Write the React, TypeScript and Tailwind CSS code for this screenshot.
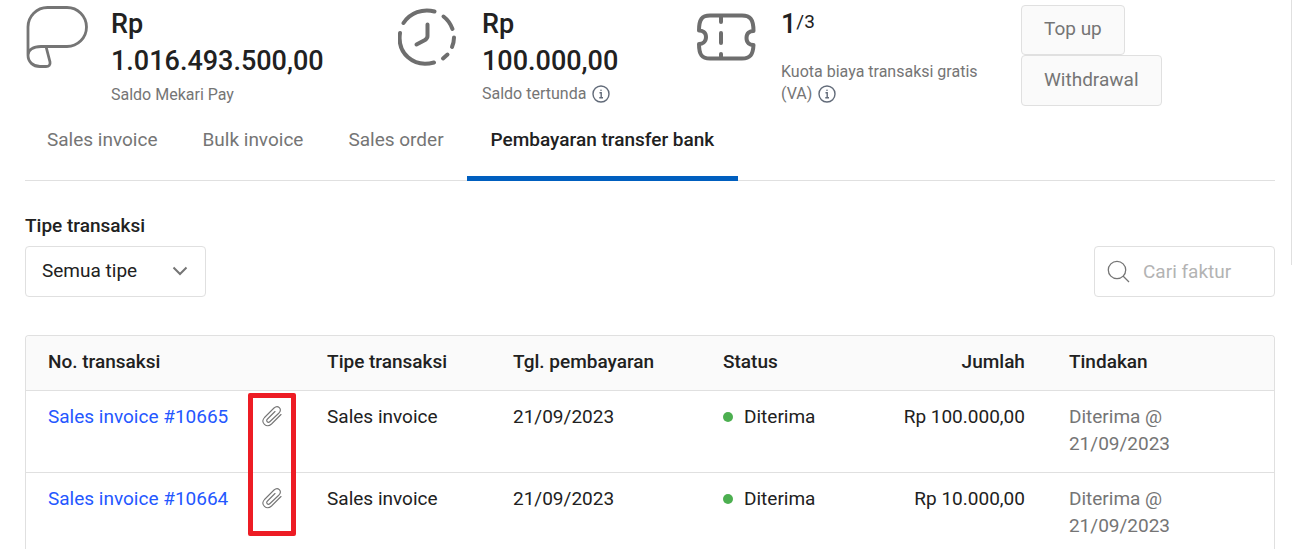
import { useState } from "react";

const tabs = ["Sales invoice", "Bulk invoice", "Sales order", "Pembayaran transfer bank"];

const transactions = [
  { id: "10665", type: "Sales invoice", date: "21/09/2023", status: "Diterima", amount: "Rp 100.000,00" },
  { id: "10664", type: "Sales invoice", date: "21/09/2023", status: "Diterima", amount: "Rp 10.000,00" },
];

const WalletIcon = () => (
  <svg width="64" height="64" viewBox="0 0 64 64" fill="none" stroke="#757575" strokeWidth="2.8" strokeLinecap="round" strokeLinejoin="round" className="shrink-0">
    <path d="M3 50V22A19.500 19.500 0 0 1 22.500 2.500H42A19.500 19.500 0 0 1 42 41.500H16C8 41.500 3 45 3 50C3 57 8 61.500 15 61.500H21C24 61.500 25.500 60 25 57L21 41.500" />
  </svg>
);

const ClockIcon = () => (
  <svg width="60" height="60" viewBox="0 0 60 60" fill="none" stroke="#6e6e6e" strokeWidth="4" strokeLinecap="round" strokeLinejoin="round" className="shrink-0">
    <path d="M5.500 16A28 28 0 0 1 36.500 4.500" />
    <path d="M2 26C-1 46 15 61 36 55.500" />
    <path d="M45.500 9.500Q51.500 14 54.500 22" />
    <path d="M56 30.500Q56 35 54 40" />
    <path d="M45 51.500L49.500 47.500" />
    <path d="M29.500 17.500V29C29.500 31 28.500 32 27 33L18.500 37.500" />
  </svg>
);

const TicketIcon = () => (
  <svg width="60" height="48" viewBox="0 0 60 48" fill="none" stroke="#6e6e6e" strokeWidth="4" strokeLinecap="round" strokeLinejoin="round" className="shrink-0">
    <path d="M14 2.500H46C54 2.500 57.500 6 57.500 18C54 18 50.500 20 50.500 25C50.500 30 54 32 57.500 32C57 42 54 45.500 46 45.500H14C6 45.500 3 42 3 31C6 31 10 29 10 24C10 19 6 17.500 3 17.500C3 6 6 2.500 14 2.500Z" />
    <path d="M25 3V9M25 20V30M25 41V45" />
  </svg>
);

const InfoIcon = () => (
  <svg width="18" height="18" viewBox="0 0 18 18" fill="none" stroke="#626b79" strokeWidth="1.4" className="ml-1.5 inline-block align-[-4px]">
    <circle cx="9" cy="9" r="8" />
    <path d="M7.500 7.700H9.200V12.800M7.300 12.800H11" />
    <circle cx="9" cy="5.300" r="0.800" fill="#626b79" stroke="none" />
  </svg>
);

const ClipIcon = () => (
  <svg width="22" height="22" viewBox="0 0 22 22" fill="none" stroke="#757575" strokeWidth="1.1" strokeLinecap="round" strokeLinejoin="round">
    <path d="M20 9.500L10.500 19C5.500 23.500 -1 17.500 3.500 12.500L13 3C17 -0.500 21.500 4 18 8L9 16.500C7 18.500 4.500 16 6.500 14L14 6.500" />
  </svg>
);

const App = () => {
  const [activeTab, setActiveTab] = useState("Pembayaran transfer bank");
  const [search, setSearch] = useState("");

  return (
    <div className="flex items-start bg-white font-[Roboto,sans-serif] text-[19px] leading-[27px] text-[#212121]">
      <main className="min-w-0 flex-1 pr-4 pl-[25px]">
        <section className="grid grid-cols-[372fr_299fr_325fr_254fr] pt-[5px]">
          <div className="flex gap-[22px]">
            <WalletIcon />
            <div className="pt-px">
              <p className="text-[27px] leading-[37px] font-medium">Rp<br />1.016.493.500,00</p>
              <p className="mt-1 text-base leading-[22px] text-[#757575]">Saldo Mekari Pay</p>
            </div>
          </div>
          <div className="flex gap-6">
            <div className="pt-0.5 pl-px">
              <ClockIcon />
            </div>
            <div className="pt-px">
              <p className="text-[27px] leading-[37px] font-medium">Rp<br />100.000,00</p>
              <p className="mt-[3px] text-base leading-[22px] text-[#757575]">Saldo tertunda<InfoIcon /></p>
            </div>
          </div>
          <div className="flex gap-[25px]">
            <div className="pt-2">
              <TicketIcon />
            </div>
            <div className="pt-px">
              <p className="text-[27px] leading-[37px] font-medium">
                1<span className="align-[5px] text-[19px] leading-none font-normal">/3</span>
              </p>
              <p className="mt-[18px] text-base leading-[22px] text-[#757575]">Kuota biaya transaksi gratis<br />(VA)<InfoIcon /></p>
            </div>
          </div>
          <div className="flex flex-col items-start">
            <button className="h-[50px] rounded border border-[#e0e0e0] bg-[#fafafa] px-[22px] pb-[3px] text-[#757575]">Top up</button>
            <button className="h-[51px] rounded border border-[#e0e0e0] bg-[#fafafa] px-[22px] pb-[3px] text-[#757575]">Withdrawal</button>
          </div>
        </section>

        <nav className="mt-[10px] flex h-[65px] gap-px border-b border-[#e0e0e0]">
          {tabs.map((tab) => (
            <button
              key={tab}
              onClick={() => setActiveTab(tab)}
              className={
                tab === activeTab
                  ? "-mb-px border-b-5 border-[#005fbf] px-6 pb-[14px] font-medium"
                  : "px-[22px] pb-[18px] text-[#757575]"
              }
            >
              {tab}
            </button>
          ))}
        </nav>

        <section className="mt-[31px] flex items-end justify-between">
          <div>
            <label htmlFor="type" className="block font-medium">Tipe transaksi</label>
            <div className="relative mt-[7px] w-[181px]">
              <select id="type" className="h-[51px] w-full appearance-none rounded border border-[#e0e0e0] bg-white px-4 pb-0.5">
                <option>Semua tipe</option>
              </select>
              <svg width="16" height="10" viewBox="0 0 16 10" fill="none" stroke="#757575" strokeWidth="2" className="pointer-events-none absolute top-5 right-[18px]">
                <path d="M1.500 1.500L8 8L14.500 1.500" />
              </svg>
            </div>
          </div>
          <label className="flex h-[51px] w-[181px] items-center gap-[13px] rounded border border-[#e0e0e0] px-3">
            <svg width="23" height="23" viewBox="0 0 23 23" fill="none" stroke="#757575" strokeWidth="1.300" className="shrink-0">
              <circle cx="10" cy="10" r="8.700" />
              <path d="M16 16L22 22" />
            </svg>
            <input
              type="text"
              aria-label="Cari faktur"
              placeholder="Cari faktur"
              value={search}
              onChange={(e) => setSearch(e.target.value)}
              className="w-full min-w-0 outline-none placeholder:text-[#b3b3b3]"
            />
          </label>
        </section>

        <section className="mt-[38px] rounded-t border border-b-0 border-[#e0e0e0]">
          <table className="w-full table-fixed text-left">
            <colgroup>
              <col className="w-[22.36%]" />
              <col className="w-[14.9%]" />
              <col className="w-[16.83%]" />
              <col className="w-[12.8%]" />
              <col className="w-[14.92%]" />
              <col />
            </colgroup>
            <thead className="bg-[#fafafa]">
              <tr className="h-[54px] border-b border-[#e0e0e0] *:px-[22px] *:pb-[3px] *:font-medium">
                <th className="rounded-tl">No. transaksi</th>
                <th>Tipe transaksi</th>
                <th>Tgl. pembayaran</th>
                <th>Status</th>
                <th className="text-right">Jumlah</th>
                <th className="rounded-tr">Tindakan</th>
              </tr>
            </thead>
            <tbody>
              {transactions.map((item, index) => (
                <tr key={item.id} className="h-[82px] border-b border-[#e0e0e0] align-top *:px-[22px] *:pt-3">
                  <td className="relative">
                    <div className="flex items-center justify-between whitespace-nowrap">
                      <a href="#" className="text-[#2457ff]">Sales invoice #{item.id}</a>
                      <ClipIcon />
                    </div>
                    {index === 0 && (
                      <div className="pointer-events-none absolute top-[2px] right-[9px] z-10 h-[143px] w-12 rounded-xs border-5 border-[#ed1c24]" />
                    )}
                  </td>
                  <td>{item.type}</td>
                  <td>{item.date}</td>
                  <td>
                    <div className="flex items-center gap-[11px]">
                      <span className="mt-0.5 size-[10px] rounded-full bg-[#4caf50]" />
                      {item.status}
                    </div>
                  </td>
                  <td className="pl-0! text-right whitespace-nowrap">{item.amount}</td>
                  <td className="text-[#757575]">Diterima @<br />{item.date}</td>
                </tr>
              ))}
            </tbody>
          </table>
        </section>
      </main>
      <div className="h-[265px] w-3 border-l border-[#e0e0e0]" />
    </div>
  );
};
export default App;
